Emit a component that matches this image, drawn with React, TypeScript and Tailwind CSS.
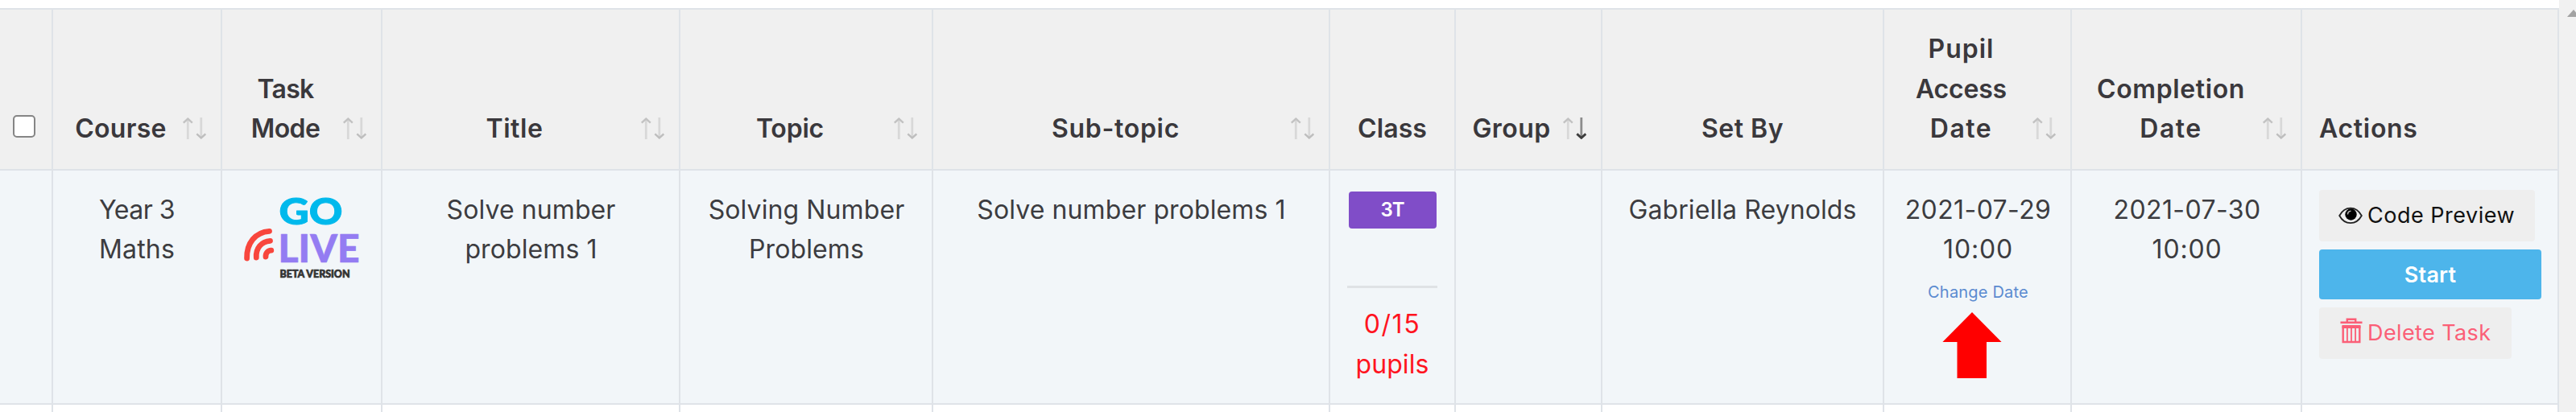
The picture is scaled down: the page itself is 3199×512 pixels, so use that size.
import type { ReactNode } from "react";
import clsx from "clsx";

type Column = {
  key: string;
  lines: { text: string; tracking: string }[];
  sort?: "none" | "desc";
  padding?: string;
};

const GRID =
  "grid grid-cols-[66px_210px_199px_370px_314px_493px_156px_182px_350px_233px_286px_319px]";

const COLUMNS: Column[] = [
  { key: "course", lines: [{ text: "Course", tracking: "tracking-[0.3px]" }], sort: "none", padding: "pl-[24px] pr-[64px]" },
  {
    key: "mode",
    lines: [
      { text: "Task", tracking: "tracking-[-0.7px]" },
      { text: "Mode", tracking: "tracking-[-0.6px]" },
    ],
    sort: "none",
    padding: "pl-[24px] pr-[64px]",
  },
  { key: "title", lines: [{ text: "Title", tracking: "tracking-[0.6px]" }], sort: "none", padding: "pl-[24px] pr-[64px]" },
  { key: "topic", lines: [{ text: "Topic", tracking: "tracking-[-0.2px]" }], sort: "none", padding: "pl-[24px] pr-[64px]" },
  { key: "subtopic", lines: [{ text: "Sub-topic", tracking: "tracking-[0.7px]" }], sort: "none" },
  { key: "class", lines: [{ text: "Class", tracking: "tracking-[0.1px]" }] },
  {
    key: "group",
    lines: [{ text: "Group", tracking: "tracking-[0.4px]" }],
    sort: "desc",
    padding: "pl-[21px] pr-[63px]",
  },
  { key: "setBy", lines: [{ text: "Set By", tracking: "tracking-[0.5px]" }] },
  {
    key: "access",
    lines: [
      { text: "Pupil", tracking: "tracking-[1px]" },
      { text: "Access", tracking: "tracking-[-0.2px]" },
      { text: "Date", tracking: "tracking-[1.5px]" },
    ],
    sort: "none",
    padding: "pl-[24px] pr-[64px]",
  },
  {
    key: "completion",
    lines: [
      { text: "Completion", tracking: "tracking-[0.6px]" },
      { text: "Date", tracking: "tracking-[1.5px]" },
    ],
    sort: "none",
  },
];

function SortArrows({ desc = false }: { desc?: boolean }) {
  return (
    <svg
      className="absolute right-[18px] bottom-[37px]"
      width="29"
      height="27"
      viewBox="0 0 29 27"
      fill="none"
    >
      <path d="M6.3 1V27" stroke="#d8d8d8" strokeWidth="2.8" />
      <path d="M0.8 6.6L6.3 1.6L11.8 6.6" stroke="#c2c2c2" strokeWidth="2.4" />
      <path d="M22.8 0V26" stroke={desc ? "#8c8c8c" : "#d8d8d8"} strokeWidth="2.8" />
      <path d="M17.3 20.4L22.8 25.4L28.3 20.4" stroke={desc ? "#3d3d3d" : "#bebebe"} strokeWidth={desc ? 2.8 : 2.4} />
    </svg>
  );
}

function HeadCell({ column }: { column: Column }) {
  return (
    <div
      className={clsx(
        "relative flex flex-col items-center justify-end border-r-2 border-[#dfe3e8] pb-[25.5px]",
        column.padding ?? (column.sort ? "pl-[26px] pr-[64px]" : "px-[22px]"),
      )}
    >
      {column.lines.map((line) => (
        <span key={line.text} className={clsx("whitespace-nowrap", line.tracking)}>
          {line.text}
        </span>
      ))}
      {column.sort && <SortArrows desc={column.sort === "desc"} />}
    </div>
  );
}

function Cell({ className, children }: { className?: string; children?: ReactNode }) {
  return (
    <div
      className={clsx(
        "flex flex-col items-center border-r-2 border-[#dfe3e8] pt-[23.5px] whitespace-nowrap",
        className,
      )}
    >
      {children}
    </div>
  );
}

function GoLiveLogo() {
  return (
    <svg className="block" width="150" height="116" viewBox="0 0 150 116">
      <g fill="none" stroke="#f8463d" strokeWidth="6.8" strokeLinecap="round">
        <path d="M6.6 85C6.2 66 17 52.5 34.5 51.3" />
        <path d="M18.3 84C17.5 72.5 24.5 64 35.5 63.3" />
        <path d="M30 83C29.8 78.5 32.5 75.5 36.8 75.2" />
      </g>
      <g fontFamily="Lato" fontWeight="900" strokeLinejoin="round">
        <text x="46.5" y="42.5" fontSize="46" fill="#00b9ec" stroke="#00b9ec" strokeWidth="1" textLength="79" lengthAdjust="spacingAndGlyphs">
          GO
        </text>
        <text x="45.5" y="89.5" fontSize="47" fill="#947cf2" stroke="#947cf2" strokeWidth="0.6" textLength="101" lengthAdjust="spacingAndGlyphs">
          LIVE
        </text>
        <text x="47.5" y="109" fontSize="13" fill="#333" stroke="#333" strokeWidth="0.7" textLength="87" lengthAdjust="spacingAndGlyphs">
          BETA VERSION
        </text>
      </g>
    </svg>
  );
}

function EyeIcon() {
  return (
    <svg width="30" height="22" viewBox="0 0 30 22" fill="none">
      <path
        d="M1.2 11C4.5 5 9.3 1.7 15 1.7S25.5 5 28.8 11C25.5 17 20.7 20.2 15 20.2S4.5 17 1.2 11Z"
        stroke="#222"
        strokeWidth="1.8"
      />
      <circle cx="15.5" cy="9.5" r="7.2" fill="#000" />
      <path d="M11.5 9.5C11.5 7 13 5.3 15.5 5.2" stroke="#b5b5b5" strokeWidth="1.5" />
    </svg>
  );
}

function TrashIcon() {
  return (
    <svg className="mb-[7px]" width="28" height="32" viewBox="0 0 28 32" fill="none" stroke="#fb5f77">
      <path d="M0.5 5.8H27.5" strokeWidth="2.6" />
      <path d="M8.8 5V1.7H19.2V5" strokeWidth="2.4" />
      <path d="M2.5 11H25.5" strokeWidth="4" />
      <path d="M3.7 10V30H24.3V10" strokeWidth="2.4" />
      <path d="M8.9 11V29M14 11V29M19.1 11V29" strokeWidth="1.8" />
    </svg>
  );
}

function ActionButton({ className, children }: { className?: string; children: ReactNode }) {
  return (
    <button
      type="button"
      className={clsx("flex items-center rounded-[4px] text-[27px] leading-[40px]", className)}
    >
      {children}
    </button>
  );
}

export default function App() {
  return (
    <div className="flex h-[512px] w-[3199px] overflow-hidden bg-white font-['Inter',sans-serif] text-[32px] leading-[49.5px] text-[#3c3c40]">
      <div className="w-[3178px] pt-[10px]">
        <div className={clsx(GRID, "h-[202px] border-y-2 border-[#dfe3e8] bg-[#f0f0f0] font-semibold text-[#3a383c]")}>
          <div className="flex items-end border-r-2 border-[#dfe3e8] pb-[39px] pl-[16px]">
            <input
              type="checkbox"
              className="size-[28px] appearance-none rounded-[5px] border-2 border-[#858585] bg-white"
            />
          </div>
          {COLUMNS.map((column) => (
            <HeadCell key={column.key} column={column} />
          ))}
          <div className="flex items-end border-r-2 border-[#dfe3e8] pb-[25.5px] pl-[21px]">
            <span className="tracking-[0.7px]">Actions</span>
          </div>
        </div>

        <div className={clsx(GRID, "h-[291px] border-b-2 border-[#dfe3e8] bg-[#f2f6f9]")}>
          <Cell />
          <Cell>
            <span className="tracking-[-0.5px]">Year 3</span>
            <span className="tracking-[0.2px]">Maths</span>
          </Cell>
          <Cell>
            <GoLiveLogo />
          </Cell>
          <Cell className="pl-[1px]">
            <span className="tracking-[0.1px]">Solve number</span>
            <span className="tracking-[0.1px]">problems 1</span>
          </Cell>
          <Cell className="pl-[1px]">
            <span className="tracking-[0.1px]">Solving Number</span>
            <span className="tracking-[0.1px]">Problems</span>
          </Cell>
          <Cell className="pl-[1px]">
            <span className="tracking-[0.1px]">Solve number problems 1</span>
          </Cell>
          <Cell className="px-[21px] text-[#ff141f]">
            <span className="mt-[2.5px] h-[46px] w-[109px] rounded-[4px] bg-[#804dc8] text-center text-[24px] leading-[46px] font-semibold tracking-[-1px] text-white">
              3T
            </span>
            <hr className="mt-[71px] mb-[20px] w-full border-t-[3px] border-[#dfe2e5]" />
            <span className="tracking-[1.6px]">0/15</span>
            <span className="tracking-[0.1px]">pupils</span>
          </Cell>
          <Cell />
          <Cell>
            <span className="tracking-[0.1px]">Gabriella Reynolds</span>
          </Cell>
          <Cell className="pl-[2px]">
            <span className="tracking-[0.4px]">2021-07-29</span>
            <span className="tracking-[0.8px]">10:00</span>
            <a className="mt-[11px] mb-[1px] text-[20px] leading-[34px] tracking-[0.2px] text-[#5b8bd0]">Change Date</a>
            <svg className="mt-[7px] mr-[16px]" width="74" height="82" viewBox="0 0 74 82">
              <path d="M37 0L73.6 37H55V82H18.5V37H0.4Z" fill="#f00" />
            </svg>
          </Cell>
          <Cell className="pl-[2px]">
            <span className="tracking-[0.4px]">2021-07-30</span>
            <span className="tracking-[0.8px]">10:00</span>
          </Cell>
          <Cell className="items-start gap-[10px] pl-[21px]">
            <ActionButton className="mt-[0.5px] h-[64px] w-[268px] gap-[6px] bg-[#eeeeee] pl-[24px] tracking-[0.5px] text-[#111]">
              <EyeIcon />
              <span>Code Preview</span>
            </ActionButton>
            <ActionButton className="h-[62px] w-[276px] justify-center bg-[#4db5eb] pt-[1px] font-semibold tracking-[0.2px] text-white">
              Start
            </ActionButton>
            <ActionButton className="h-[64px] w-[239px] gap-[6px] bg-[#eeeeee] pl-[26px] tracking-[0.4px] text-[#fb5f77]">
              <TrashIcon />
              <span>Delete Task</span>
            </ActionButton>
          </Cell>
        </div>

        {/* top edge of the following row */}
        <div className={clsx(GRID, "h-[9px]")}>
          {Array.from({ length: 12 }, (_, i) => (
            <div key={i} className="border-r-2 border-[#dfe3e8]" />
          ))}
        </div>
      </div>

      <div className="w-[21px] overflow-hidden bg-[#f1f1f1] pt-[12px] pl-[10px]">
        <svg className="block" width="16" height="9" viewBox="0 0 16 9">
          <path d="M8 0L16 9H0Z" fill="#a3a3a3" />
        </svg>
      </div>
    </div>
  );
}
